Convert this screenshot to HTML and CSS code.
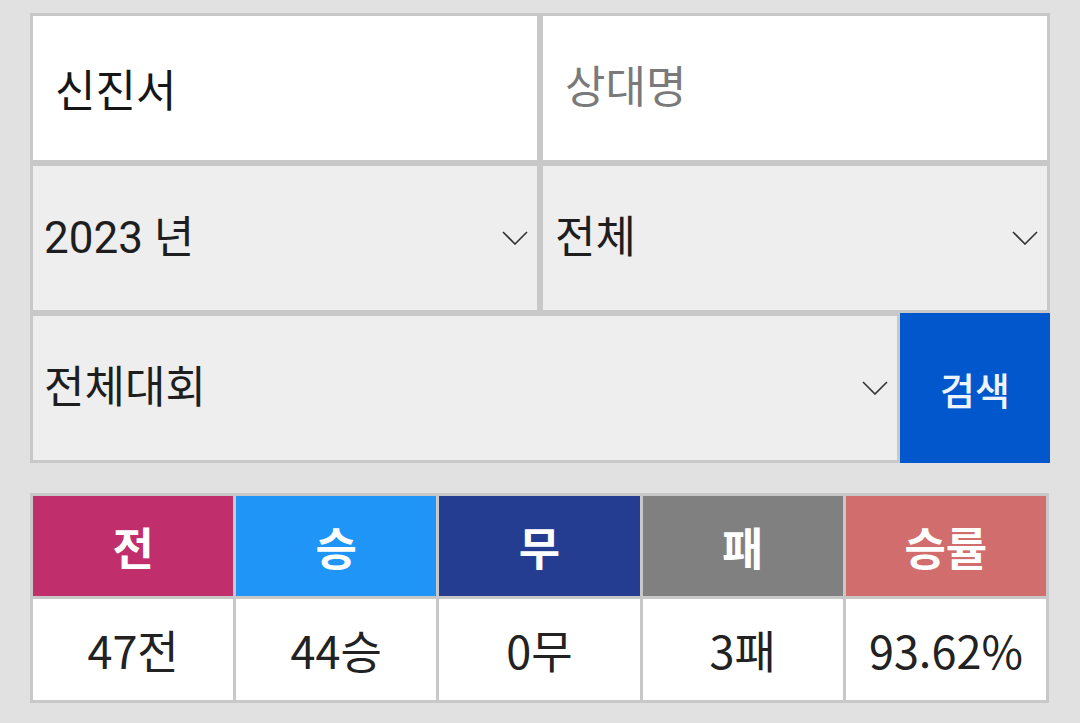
FILE: index.html
```html
<!DOCTYPE html>
<html lang="ko">
<head>
    <meta charset="UTF-8">
    <meta name="viewport" content="width=device-width, initial-scale=1.0">
    <title>상대전적 검색</title>
    <link rel="stylesheet" href="styles.css">
</head>
<body>

    <form class="search-form" onsubmit="return false;">
        <input class="field" type="text" value="신진서">
        <input class="field" type="text" placeholder="상대명">

        <div class="select-wrap">
            <select class="select-box select-year">
                <option>2023 년</option>
                <option>2022 년</option>
            </select>
            <svg class="chevron" width="26" height="14" viewBox="0 0 26 14"><path d="M1 1 L13 13 L25 1" /></svg>
        </div>
        <div class="select-wrap">
            <select class="select-box">
                <option>전체</option>
                <option>승</option>
                <option>패</option>
            </select>
            <svg class="chevron" width="26" height="14" viewBox="0 0 26 14"><path d="M1 1 L13 13 L25 1" /></svg>
        </div>

        <!-- 대회 선택 + 검색 버튼 -->
        <div class="last-row">
            <div class="select-wrap">
                <select class="select-box select-year">
                    <option>전체대회</option>
                </select>
                <svg class="chevron" width="26" height="14" viewBox="0 0 26 14"><path d="M1 1 L13 13 L25 1" /></svg>
            </div>
            <button class="search-button" type="submit">검색</button>
        </div>
    </form>

    <table class="record-table">
        <tr>
            <th class="col-total">전</th>
            <th class="col-win">승</th>
            <th class="col-draw">무</th>
            <th class="col-lose">패</th>
            <th class="col-rate">승률</th>
        </tr>
        <tr>
            <td>47전</td>
            <td>44승</td>
            <td>0무</td>
            <td>3패</td>
            <td>93.62%</td>
        </tr>
    </table>

</body>
</html>
```

FILE: styles.css
```css
body {
    margin: 0;
    background-color: #e1e1e1;
    font-family: Roboto, "Noto Sans CJK KR", sans-serif;
}
.search-form {
    display: grid;
    grid-template-columns: 1fr 1fr;
    width: 1020px;
    margin: 13px 0 0 30px;
}
.field {
    box-sizing: border-box;
    height: 150px;
    width: 100%;
    margin: 0;
    padding: 0 0 0 22px;
    border: 3px solid #c8c8c8;
    border-radius: 0;
    background-color: #fff;
    font-family: Roboto, "Noto Sans CJK KR", sans-serif;
    font-size: 44px;
    color: #161616;
    outline: none;
}
.field::placeholder {
    color: #7a7a7a;
}
.select-wrap {
    position: relative;
    height: 150px;
}
.select-box {
    box-sizing: border-box;
    width: 100%;
    height: 150px;
    margin: 0;
    padding: 0 0 0 12px;
    border: 3px solid #c8c8c8;
    border-radius: 0;
    background-color: #eeeeee;
    font-family: Roboto, "Noto Sans CJK KR", sans-serif;
    font-size: 44px;
    color: #1e1e1e;
    appearance: none;
    -webkit-appearance: none;
    outline: none;
}
.select-year {
    padding-left: 11px;
}
.chevron {
    position: absolute;
    right: 12px;
    top: 68px;
    fill: none;
    stroke: #333;
    stroke-width: 1.6;
    pointer-events: none;
}
.last-row {
    grid-column: 1 / 3;
    display: flex;
}
.last-row .select-wrap {
    flex: 1;
}
.search-button {
    width: 150px;
    height: 150px;
    border: none;
    border-radius: 0;
    background-color: #0257cc;
    color: #eef4ff;
    font-family: "Noto Sans CJK KR", sans-serif;
    font-size: 38px;
    font-weight: 500;
    cursor: pointer;
}
.record-table {
    margin: 30px 0 0 30px;
    width: 1019px;
    table-layout: fixed;
    border-collapse: separate;
    border-spacing: 3px;
    background-color: #c8c8c8;
    font-family: "Noto Sans CJK KR", sans-serif;
}
.record-table th {
    height: 100px;
    padding: 0;
    font-size: 45px;
    font-weight: 700;
    color: #fff;
}
.record-table td {
    height: 101px;
    padding: 0;
    background-color: #fff;
    text-align: center;
    font-size: 45px;
    color: #222;
}
.col-total { background-color: #c02f6b; }
.col-win { background-color: #1f96f7; }
.col-draw { background-color: #253d90; }
.col-lose { background-color: #808080; }
.col-rate { background-color: #d16d6d; }
```
